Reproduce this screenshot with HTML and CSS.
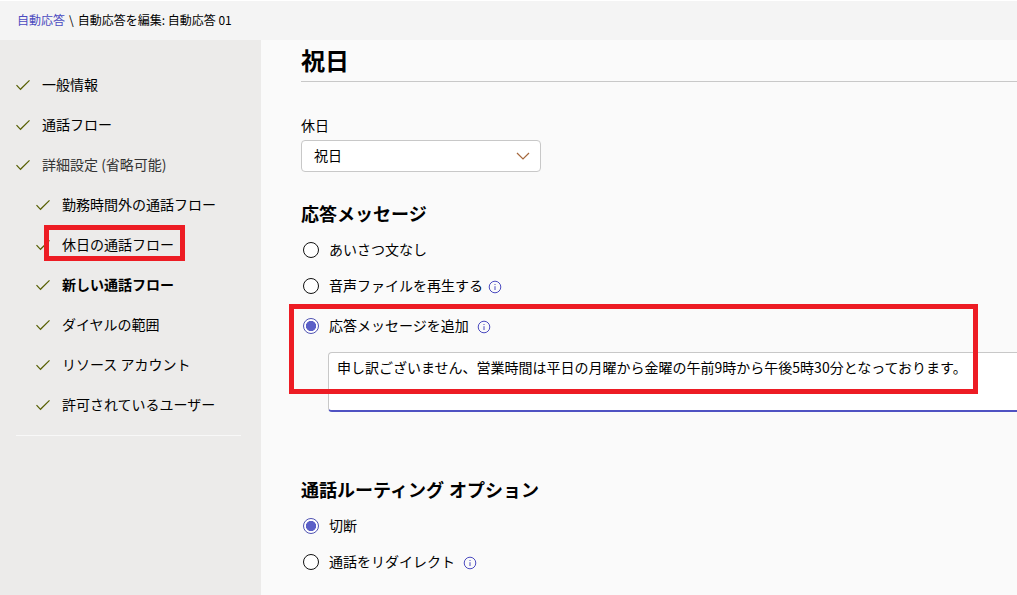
FILE: index.html
```
<!DOCTYPE html>
<html lang="ja">
<head>
    <meta charset="UTF-8">
    <meta name="viewport" content="width=device-width, initial-scale=1.0">
    <title>自動応答を編集</title>
    <link rel="stylesheet" href="styles.css">
</head>
<body>
    <svg class="symbols" aria-hidden="true">
        <symbol id="check" viewBox="0 0 16 12">
            <path d="M1.5 6.2 L5.5 10.3 L14.5 1.4" />
        </symbol>
        <symbol id="info" viewBox="0 0 14 14">
            <circle cx="7" cy="7" r="5.8" />
            <path d="M7 6.2 V10 M7 4 V5" />
        </symbol>
    </svg>

    <div class="header">
        <a href="#">自動応答</a><span class="sep">\</span><span>自動応答を編集: 自動応答 01</span>
    </div>

    <div class="page">
        <div class="sidebar">
            <ul class="steps">
                <li><svg class="check"><use href="#check" /></svg>一般情報</li>
                <li><svg class="check"><use href="#check" /></svg>通話フロー</li>
                <li class="optional"><svg class="check"><use href="#check" /></svg>詳細設定 (省略可能)</li>
                <li class="sub"><svg class="check"><use href="#check" /></svg>勤務時間外の通話フロー</li>
                <li class="sub"><svg class="check"><use href="#check" /></svg>休日の通話フロー<span class="mark mark-step"></span></li>
                <li class="sub current"><svg class="check"><use href="#check" /></svg>新しい通話フロー</li>
                <li class="sub"><svg class="check"><use href="#check" /></svg>ダイヤルの範囲</li>
                <li class="sub"><svg class="check"><use href="#check" /></svg>リソース アカウント</li>
                <li class="sub"><svg class="check"><use href="#check" /></svg>許可されているユーザー</li>
            </ul>
            <div class="line"></div>
        </div>

        <div class="content">
            <h1>祝日</h1>

            <div class="label">休日</div>
            <div class="select">
                <span>祝日</span>
                <svg class="chevron" viewBox="0 0 14 8"><path d="M1 1 L7 7 L13 1" /></svg>
            </div>

            <h2>応答メッセージ</h2>
            <div class="option"><span class="radio"></span>あいさつ文なし</div>
            <div class="option"><span class="radio"></span>音声ファイルを再生する<svg class="info"><use href="#info" /></svg></div>
            <div class="message">
                <div class="option"><span class="radio checked"></span>応答メッセージを追加<svg class="info wide"><use href="#info" /></svg></div>
                <div class="textbox">申し訳ございません、営業時間は平日の月曜から金曜の午前9時から午後5時30分となっております。</div>
                <span class="mark mark-message"></span>
            </div>

            <h2 class="routing">通話ルーティング オプション</h2>
            <div class="option"><span class="radio checked"></span>切断</div>
            <div class="option"><span class="radio"></span>通話をリダイレクト<svg class="info wide"><use href="#info" /></svg></div>
        </div>
    </div>
</body>
</html>
```
FILE: styles.css
```
* {
    box-sizing: border-box;
}
body {
    margin: 0;
    height: 595px;
    overflow: hidden;
    display: flex;
    flex-direction: column;
    font-family: "Noto Sans CJK JP", sans-serif;
    font-size: 14px;
    color: #000;
    background-color: #fafafa;
}
.symbols {
    display: none;
}
svg {
    fill: none;
    flex-shrink: 0;
}
.header {
    height: 40px;
    flex-shrink: 0;
    display: flex;
    align-items: center;
    padding: 0 0 2px 17px;
    border-top: 1px solid #fff;
    background-color: #f4f4f4;
    font-size: 12px;
    white-space: pre;
}
.header a {
    color: #4b4bc0;
    text-decoration: none;
}
.sep {
    margin: 0 4px;
}
.page {
    display: flex;
    flex: 1;
}
.sidebar {
    width: 261px;
    flex-shrink: 0;
    padding: 25px 20px 0 16px;
    background-color: #ecebea;
}
.steps {
    margin: 0;
    padding: 0;
    list-style: none;
}
.steps li {
    position: relative;
    display: flex;
    align-items: center;
    height: 40px;
    padding-bottom: 2px;
    white-space: nowrap;
}
.steps .sub {
    padding-left: 20px;
}
.steps .optional {
    color: #333;
}
.steps .current {
    font-weight: bold;
}
.check {
    width: 16px;
    height: 12px;
    margin: 2px 11px 0 -1px;
    stroke: #565e00;
    stroke-width: 1.2;
}
.line {
    height: 1px;
    margin-top: 10px;
    background-color: #f8f8f8;
}
.content {
    flex: 1;
    min-width: 0;
    padding-left: 40px;
}
h1 {
    margin: 0 0 34px;
    height: 42px;
    line-height: 40px;
    border-bottom: 1px solid #c8c8c8;
    font-size: 24px;
}
.label {
    height: 24px;
    line-height: 18px;
}
.select {
    width: 240px;
    height: 32px;
    display: flex;
    align-items: center;
    justify-content: space-between;
    padding: 0 10px 2px 12px;
    border: 1px solid #c8c8c8;
    border-radius: 4px;
    background-color: #fff;
}
.chevron {
    width: 14px;
    height: 8px;
    margin-top: 2px;
    stroke: #a5683d;
    stroke-width: 1.2;
}
h2 {
    margin: 27px 0 5px;
    line-height: 28px;
    font-size: 18px;
}
.routing {
    margin: 63px 0 5px;
    word-spacing: 1px;
}
.option {
    display: flex;
    align-items: center;
    height: 36px;
    padding-bottom: 2px;
}
.radio {
    width: 16px;
    height: 16px;
    margin: 2px 10px 0 2px;
    border: 1px solid #111;
    border-radius: 50%;
    background-color: #fff;
}
.radio.checked {
    border-color: #4f52b2;
    background: radial-gradient(circle, #5b5fc7 4.8px, #fff 5.4px);
}
.info {
    width: 14px;
    height: 14px;
    margin: 4px 0 0 5px;
    stroke: #4b4bc0;
}
.info.wide {
    margin-left: 8px;
}
.message {
    position: relative;
    padding-top: 4px;
}
.textbox {
    height: 60px;
    margin: 8px 0 0 27px;
    padding: 4px 8px;
    border: 1px solid #c8c8c8;
    border-right: none;
    border-bottom: 2px solid #4f52c2;
    border-radius: 4px 0 0 4px;
    background-color: #fff;
    line-height: 20px;
    white-space: nowrap;
}
/* red frames around the settings to look at */
.mark {
    position: absolute;
    border: 5px solid #ed1c24;
}
.mark-step {
    top: 0;
    left: 28px;
    width: 141px;
    height: 36px;
}
.mark-message {
    top: 0;
    left: -12px;
    width: 689px;
    height: 90px;
}
```
